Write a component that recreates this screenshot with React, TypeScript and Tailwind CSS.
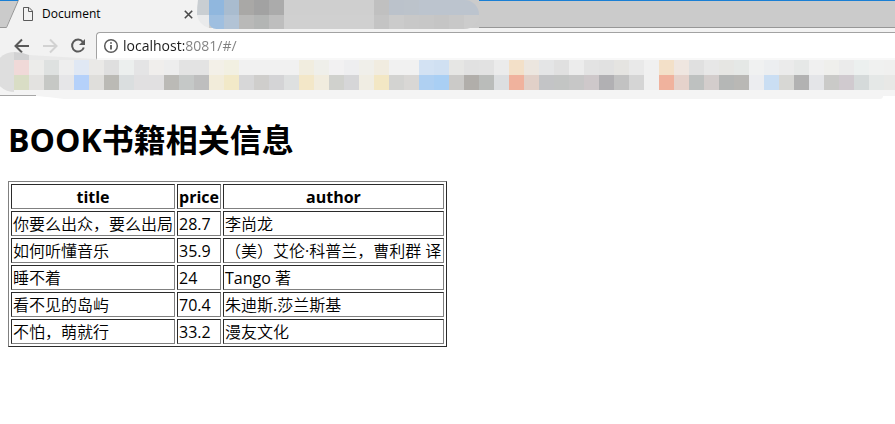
import React from "react";

const books = [
  { title: "你要么出众，要么出局", price: "28.7", author: "李尚龙" },
  { title: "如何听懂音乐", price: "35.9", author: "（美）艾伦·科普兰，曹利群 译" },
  { title: "睡不着", price: "24", author: "Tango 著" },
  { title: "看不见的岛屿", price: "70.4", author: "朱迪斯.莎兰斯基" },
  { title: "不怕，萌就行", price: "33.2", author: "漫友文化" },
];

// blurred-out bookmarks, one top/bottom pair per column
const bookmarkTiles =
  "f0d9d8/d9ddc5 ececea/e3e2e0 dee1e0/c6c8c5 eeeeee/e6e6e8 e0e8f4/b5d1fa eae9e7/dfdedb dfdfdf/bbbab5 ecefee/dadedf e4e4e5/e1e0e1 f0eeec/e1e0e1 ededed/bbbab6 e3e3e3/c5c8c7 e3e3e3/bebebe f3f0e8/f2ecda f2f0e2/f2e9c8 f1f1f1/d7d7d8 f1f1f1/cfcecc f1f1f1/d4d4d6 f1f1f1/dee0e0 f1eddf/f3e7c8 efefea/f1ecde f2f1f2/d0d1cd eeeef0/d6d6d8 f0efea/f0ede3 f1ece0/f3e7c4 f1f1f1/d3d3d1 f1f1f1/d9d7d5 d3e2f3/afd0f2 d0e0f2/a9cff4 e6e6e4/cbcac8 e1e1e1/b1aeaa e2e2e2/babcba ebebeb/dcdee0 f3e0c8/f0b29d ece6df/e1d0c8 e4e5e6/c3c4c6 e0e0e0/c3c5c4 ececec/c7c7c7 e3e3e3/cec8ca e1e1e1/b1b0b3 e5e4e1/c2c2c2 e9e9e9/d5d5d5 f0f0f0/f0f0f0 f3e0c8/f0b29d efe6e0/e5d2cb e0e0e0/bec1c0 e7e7e7/d3cdcc e6e6e3/b5b7b6 e5e8e6/b9b8b5 f0f1f1/ecedf0 eceef0/cadef3 ebebeb/d7d7d4 e6e8e7/b2b2b2 f0f0f0/e4e5e8 efefec/cacac8 ebebeb/d0cacf ecf0ef/d5dada f0f1f0/e5e8e7 f0f0ef/e8e8e6"
    .split(" ")
    .map((pair) => pair.split("/"));

const tabTiles =
  "90b7de/9fbfe0 a9bccf/b2c3d5 a9a8a6/b9b9b8 a2a2a2/b3b5b4 ababab/bebebe cfcfcf/d0d0d0 cfcfcf/d0d0d0 cfcfcf/d0d0d0 cfcfcf/d0d0d0 cfcfcf/d0d0d0 cfcfcf/d0d0d0 c0c0c0/c4c4c4 bbc2cb/cbcbcb bcc3cb/c8c8c8 bcc4ce/c7c7c7 bcc4ce/c5c5c5 bcc4ce/c8c8c8 bcc4ce/cccccc"
    .split(" ")
    .map((pair) => pair.split("/"));

const Tiles = ({ tiles }: { tiles: string[][] }) => (
  <>
    {tiles.map(([top, bottom], i) => (
      <div key={i} className="w-[15px] shrink-0">
        <div className="h-[15px]" style={{ backgroundColor: `#${top}` }} />
        <div className="h-[15px]" style={{ backgroundColor: `#${bottom}` }} />
      </div>
    ))}
  </>
);

const TabStrip = () => (
  <div className="flex h-7 bg-[#cbcbcb]">
    <div className="relative flex w-[209px] shrink-0 items-center bg-[#f2f2f2] pl-[22px]">
      <svg className="absolute left-0 top-0" width="20" height="28" viewBox="0 0 20 28">
        <path d="M0 0H18.500L6 27.500H0Z" fill="#cbcbcb" />
        <path d="M18.500 0L6.500 27.500H0" fill="none" stroke="#979797" />
        <path d="M0 .5H18" stroke="#1a7fd4" />
      </svg>
      <svg width="12" height="14" viewBox="0 0 12 14" fill="none" stroke="#5a5a5a">
        <path d="M1.500 .5H7L10.500 4V13.500H1.500Z" />
        <path d="M6.500 .5V4.500H10.500" />
      </svg>
      <span className="ml-2 text-xs text-black">Document</span>
      <button aria-label="Close tab" className="ml-auto mr-4">
        <svg width="9" height="9" viewBox="0 0 9 9" stroke="#4a4a4a" strokeWidth="1.6">
          <path d="M.8 .8L8.200 8.200M8.200 .8L.8 8.200" />
        </svg>
      </button>
      <svg className="absolute right-0 top-0" width="12" height="28" viewBox="0 0 12 28">
        <path d="M1 0H12V15H0Q0 6 1 0Z" fill="#c9ced2" />
        <path d="M0 15H12V28Q2 25 0 15Z" fill="#e9eaeb" />
      </svg>
    </div>
    <div className="flex h-[29px] overflow-hidden rounded-r-2xl rounded-bl-lg">
      <Tiles tiles={tabTiles} />
    </div>
    <div className="flex-1 border-b border-t border-b-[#979797] border-t-[#1a7fd4]" />
  </div>
);

const Toolbar = () => (
  <div className="flex h-8 bg-[#f2f2f2] pt-1">
    <div className="flex w-24 shrink-0 items-center gap-3 pl-[14px]">
      <button aria-label="Back">
        <svg width="16" height="16" viewBox="0 0 16 16" fill="none" stroke="#5a5a5a" strokeWidth="2">
          <path d="M15 8H2M8 1.500L1.500 8L8 14.500" />
        </svg>
      </button>
      <button aria-label="Forward" disabled>
        <svg width="16" height="16" viewBox="0 0 16 16" fill="none" stroke="#d2d2d2" strokeWidth="2">
          <path d="M1 8H14M8 1.500L14.500 8L8 14.500" />
        </svg>
      </button>
      <button aria-label="Reload">
        <svg width="16" height="16" viewBox="0 0 16 16" fill="none" stroke="#5a5a5a" strokeWidth="2">
          <path d="M12.800 3.800A6 6 0 1 0 13.800 9.500" />
          <path d="M15 1V7H9Z" fill="#5a5a5a" stroke="none" />
        </svg>
      </button>
    </div>
    <div className="flex flex-1 items-center gap-1 rounded-tl-sm border-b-2 border-l border-t border-b-[#f8f8f8] border-l-[#a2a2a2] border-t-[#a2a2a2] bg-white pl-[6px]">
      <svg width="16" height="16" viewBox="0 0 16 16" fill="none" stroke="#5a5a5a" strokeWidth="1.500">
        <circle cx="8" cy="8" r="6.300" />
        <path d="M8 7V11.500M8 4.200V5.800" strokeWidth="1.800" />
      </svg>
      <input
        aria-label="Address"
        readOnly
        value="localhost:8081/#/"
        className="min-w-0 flex-1 bg-[linear-gradient(90deg,#1c1c1c_61px,#808080_61px)] bg-clip-text text-sm text-transparent outline-none"
      />
    </div>
  </div>
);

const BookmarksBar = () => (
  <div className="relative h-9 bg-[#f4f4f4]">
    {/* smudge that spills over both edges of the bar */}
    <svg className="absolute -top-2 left-0" width="110" height="48" viewBox="0 0 110 48">
      <path d="M14 0A20 20 0 0 0 14 40Z" fill="#dedede" />
      <path d="M14 0Q22 0 29 3V8H14Z" fill="#d2d2d3" />
      <path d="M29 3L96 7V8H29Z" fill="#e9e9e9" />
      <path d="M0 43.500H36" stroke="#a6a6a6" />
      <path d="M36 44H110V47H64Q50 45 36 44Z" fill="#f4f4f4" />
    </svg>
    <div className="absolute left-[110px] right-3 top-9 h-[3px] rounded-br-full bg-[#f4f4f4]" />
    <div className="flex h-[30px] overflow-hidden pl-[14px]">
      <Tiles tiles={bookmarkTiles} />
    </div>
  </div>
);

const cell =
  "border border-t-[#2b2b2b] border-l-[#2b2b2b] border-r-[#808080] border-b-[#808080] px-px pt-[2px] whitespace-nowrap";

const BookTable = () => (
  <table className="border-separate border-spacing-[2px] border border-t-[#808080] border-l-[#808080] border-r-[#2b2b2b] border-b-[#2b2b2b] leading-[21px]">
    <colgroup>
      <col />
      <col />
      <col className="w-[221px]" />
    </colgroup>
    <thead>
      <tr>
        <th className={cell}>title</th>
        <th className={cell}>price</th>
        <th className={cell}>author</th>
      </tr>
    </thead>
    <tbody>
      {books.map((book) => (
        <tr key={book.title}>
          <td className={cell}>{book.title}</td>
          <td className={cell}>{book.price}</td>
          <td className={cell}>{book.author}</td>
        </tr>
      ))}
    </tbody>
  </table>
);

const App = () => {
  return (
    <div className="min-h-screen overflow-hidden bg-white font-['Open_Sans','Noto_Sans_CJK_SC_DemiLight','Noto_Sans_CJK_SC_Light','Noto_Sans_CJK_SC',sans-serif] text-base text-black">
      <header>
        <TabStrip />
        <Toolbar />
        <BookmarksBar />
      </header>
      <main className="px-2 pt-[22px]">
        <h1 className="mb-5 font-['Open_Sans','Noto_Sans_CJK_SC',sans-serif] text-[32px] font-bold leading-[43px]">
          BOOK书籍相关信息
        </h1>
        <BookTable />
      </main>
    </div>
  );
};

export default App;
